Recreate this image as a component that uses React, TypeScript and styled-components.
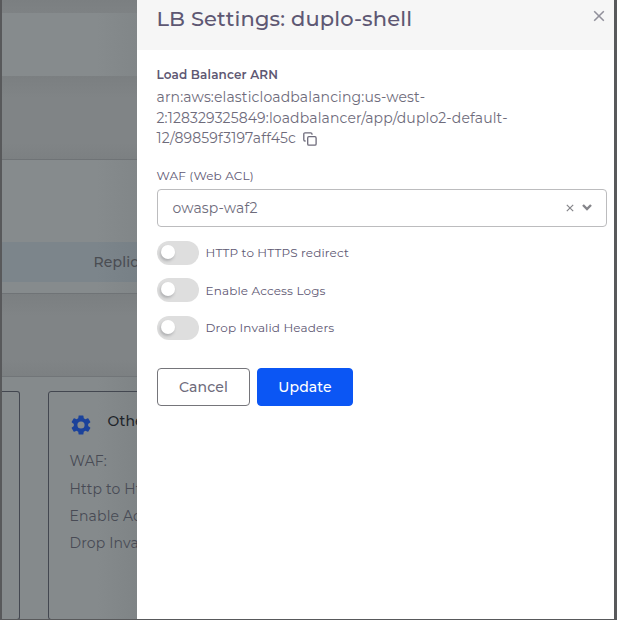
import React from "react";
import styled, { createGlobalStyle } from "styled-components";

const GlobalStyle = createGlobalStyle`
  * { box-sizing: border-box; }
  body { margin: 0; font-family: Montserrat, Inter, sans-serif; color: #6e6b7b; overflow: hidden; }
`;

const Frame = styled.div`
  display: grid;
  grid-template-columns: 135px 477px;
  width: 617px;
  height: 620px;
  border: solid #58595b;
  border-width: 0 3px 1px 2px;
`;

const Text = styled.span<{ $size?: number; $weight?: number; $color?: string }>`
  font-size: ${(p) => p.$size ?? 14}px;
  letter-spacing: 0.14px;
  font-weight: ${(p) => p.$weight ?? 400};
  color: ${(p) => p.$color ?? "#6e6b7b"};
  white-space: nowrap;
`;

const Backdrop = styled.div`
  display: flex;
  flex-direction: column;
  min-width: 0;
  height: 619px;
  overflow: hidden;
  background: #858a8c;
`;

const Gap = styled.div<{ $height: number }>`
  flex: none;
  height: ${(p) => p.$height}px;
  background: linear-gradient(#7b7f81, #808486 22px, #808486 calc(100% - 16px), #7c8082);
`;

const Band = styled.div<{ $height: number; $line?: boolean }>`
  flex: none;
  height: ${(p) => p.$height}px;
  background: linear-gradient(90deg, #868b8d 70%, #818688);
  border: solid #6f7376;
  border-width: ${(p) => (p.$line ? "1px 0" : "0")};
`;

const TableHead = styled.div`
  display: flex;
  align-items: center;
  height: 40px;
  margin-top: 82px;
  padding-left: 91.5px;
  overflow: hidden;
  background: linear-gradient(90deg, #7c858b 70%, #778086);
`;

const Cards = styled.div`
  display: grid;
  grid-template-columns: 18px 230px;
  column-gap: 28px;
  flex: 1;
  padding-top: 14px;
  border-top: 1px solid #717578;
  background: linear-gradient(90deg, #858a8c 0, #858a8c 95px, #7f8486 135px);
`;

const Card = styled.div<{ $cut?: boolean }>`
  height: 229px;
  border: 1px solid #434750;
  border-left-width: ${(p) => (p.$cut ? 0 : 1)}px;
  border-radius: ${(p) => (p.$cut ? "0 3px 3px 0" : "3px")};
  padding: ${(p) => (p.$cut ? "0" : "20px 0 0 20.5px")};
`;

const CardTitle = styled.div`
  display: flex;
  gap: 14px;
  height: 35.5px;
  svg { flex: none; margin: 1px 0.5px 0 -0.5px; }
`;

const CardLine = styled.div`
  display: flex;
  align-items: center;
  height: 27.4px;
`;

const Drawer = styled.section`
  display: flex;
  flex-direction: column;
  background: #fff;
`;

const Header = styled.header`
  display: flex;
  justify-content: space-between;
  height: 50px;
  padding: 6px 9px 0 19.5px;
  background: #f6f6f6;
  line-height: 26px;
  svg { margin-top: 4px; }
`;

const Body = styled.div`
  display: flex;
  flex-direction: column;
  padding: 16px 7px 0 20px;
`;

const Label = styled.div<{ $top?: number }>`
  height: 18px;
  line-height: 18px;
  margin: ${(p) => p.$top ?? 0}px 0 0 -0.5px;
  display: flex;
`;

const Arn = styled.div`
  display: flex;
  flex-direction: column;
  margin: 3px 0 0 -0.5px;
`;

const ArnLine = styled.div`
  display: flex;
  align-items: center;
  gap: 7px;
  height: 20.5px;
  svg { margin-top: 1px; }
`;

const Select = styled.div`
  display: flex;
  align-items: center;
  height: 38px;
  margin-top: 4px;
  padding: 0 14px 0 14.5px;
  border: 1px solid #bcbcbe;
  border-radius: 4px;
`;

const SelectIcons = styled.div`
  display: flex;
  align-items: center;
  gap: 8px;
  margin-left: auto;
`;

const Toggles = styled.div`
  display: grid;
  row-gap: 13.5px;
  margin-top: 14px;
`;

const ToggleRow = styled.label`
  display: flex;
  align-items: center;
  gap: 6.5px;
  height: 24px;
`;

const Track = styled.span`
  display: flex;
  align-items: center;
  width: 42px;
  height: 24px;
  padding: 0 0 2px 4px;
  border-radius: 12px;
  background: #dedede;
`;

const Knob = styled.span`
  width: 14px;
  height: 14px;
  border-radius: 50%;
  background: #fff;
  box-shadow: -1px 2px 3px rgba(34, 41, 47, 0.25);
`;

const Actions = styled.div`
  display: flex;
  gap: 7px;
  margin-top: 28px;
`;

const Button = styled.button<{ $primary?: boolean }>`
  width: ${(p) => (p.$primary ? 96 : 93)}px;
  height: 38px;
  padding: 0;
  font-family: inherit;
  border: 1px solid ${(p) => (p.$primary ? "#0b56f4" : "#75757a")};
  border-radius: 4px;
  background: ${(p) => (p.$primary ? "#0b56f4" : "#fff")};
`;

const Cross = ({ size, color, width }: { size: number; color: string; width: number }) => (
  <svg width={size} height={size} viewBox="0 0 10 10" fill="none" stroke={color} strokeWidth={width}>
    <path d="M1 1L9 9M9 1L1 9" />
  </svg>
);

const Gear = () => (
  <svg width="24" height="24" viewBox="0 0 24 24" fill="#1b429b">
    <path d="M19.14 12.94c.04-.3.06-.61.06-.94 0-.32-.02-.64-.07-.94l2.03-1.58a.49.49 0 0 0 .12-.61l-1.92-3.32a.49.49 0 0 0-.59-.22l-2.39.96c-.5-.38-1.03-.7-1.62-.94L14.4 2.81a.48.48 0 0 0-.48-.41h-3.84c-.24 0-.43.17-.47.41l-.36 2.54c-.59.24-1.13.57-1.62.94l-2.39-.96a.48.48 0 0 0-.59.22L2.74 8.87a.48.48 0 0 0 .12.61l2.03 1.58c-.05.3-.09.63-.09.94s.02.64.07.94l-2.03 1.58a.49.49 0 0 0-.12.61l1.92 3.32c.12.22.37.29.59.22l2.39-.96c.5.38 1.03.7 1.62.94l.36 2.54c.05.24.24.41.48.41h3.84c.24 0 .44-.17.47-.41l.36-2.54c.59-.24 1.13-.56 1.62-.94l2.39.96c.22.08.47 0 .59-.22l1.92-3.32a.48.48 0 0 0-.12-.61l-2.01-1.58zM12 15.6a3.6 3.6 0 1 1 0-7.2 3.6 3.6 0 0 1 0 7.2z" />
  </svg>
);

const Copy = () => (
  <svg width="14" height="14" viewBox="0 0 14 14" fill="none" stroke="#6e6b7b" strokeWidth="1.3">
    <rect x="4.7" y="4.7" width="8.4" height="8.4" rx="1.2" />
    <path d="M2.6 9H2A1.2 1.2 0 0 1 .8 7.8V2A1.2 1.2 0 0 1 2 .8h5.8A1.2 1.2 0 0 1 9 2v.7" />
  </svg>
);

const details = ["WAF:", "Http to Https Redirect:", "Enable Access Logs:", "Drop Invalid Headers:"];

const toggles = ["HTTP to HTTPS redirect", "Enable Access Logs", "Drop Invalid Headers"];

export default function App() {
  return (
    <>
      <GlobalStyle />
      <Frame>
        <Backdrop>
          <Gap $height={13} />
          <Band $height={63} />
          <Gap $height={83} />
          <Band $height={135} $line>
            <TableHead>
              <Text $weight={500} $color="#4a4d52">Replicas</Text>
            </TableHead>
          </Band>
          <Gap $height={82} />
          <Cards>
            <Card $cut />
            <Card>
              <CardTitle>
                <Gear />
                <Text $weight={500} $color="#20242a">Other Settings</Text>
              </CardTitle>
              {details.map((d) => (
                <CardLine key={d}>
                  <Text $color="#484b55">{d}</Text>
                </CardLine>
              ))}
            </Card>
          </Cards>
        </Backdrop>
        <Drawer>
          <Header>
            <Text $size={21} $weight={500} $color="#5e5873">LB Settings: duplo-shell</Text>
            <Cross size={12} color="#91909b" width={1.3} />
          </Header>
          <Body>
            <Label>
              <Text $size={12} $weight={600} $color="#5e5873">Load Balancer ARN</Text>
            </Label>
            <Arn>
              <ArnLine><Text>arn:aws:elasticloadbalancing:us-west-</Text></ArnLine>
              <ArnLine><Text>2:128329325849:loadbalancer/app/duplo2-default-</Text></ArnLine>
              <ArnLine><Text>12/89859f3197aff45c</Text><Copy /></ArnLine>
            </Arn>
            <Label $top={18}>
              <Text $size={12} $color="#5e5873">WAF (Web ACL)</Text>
            </Label>
            <Select>
              <Text>owasp-waf2</Text>
              <SelectIcons>
                <Cross size={8} color="#85858a" width={1.5} />
                <svg width="10" height="7" viewBox="0 0 10 7" fill="none" stroke="#85858a" strokeWidth="2.4">
                  <path d="M1 1L5 5L9 1" />
                </svg>
              </SelectIcons>
            </Select>
            <Toggles>
              {toggles.map((t) => (
                <ToggleRow key={t}>
                  <Track><Knob /></Track>
                  <Text $size={12} $color="#5e5873">{t}</Text>
                </ToggleRow>
              ))}
            </Toggles>
            <Actions>
              <Button><Text $weight={500}>Cancel</Text></Button>
              <Button $primary><Text $weight={500} $color="#fff">Update</Text></Button>
            </Actions>
          </Body>
        </Drawer>
      </Frame>
    </>
  );
}
